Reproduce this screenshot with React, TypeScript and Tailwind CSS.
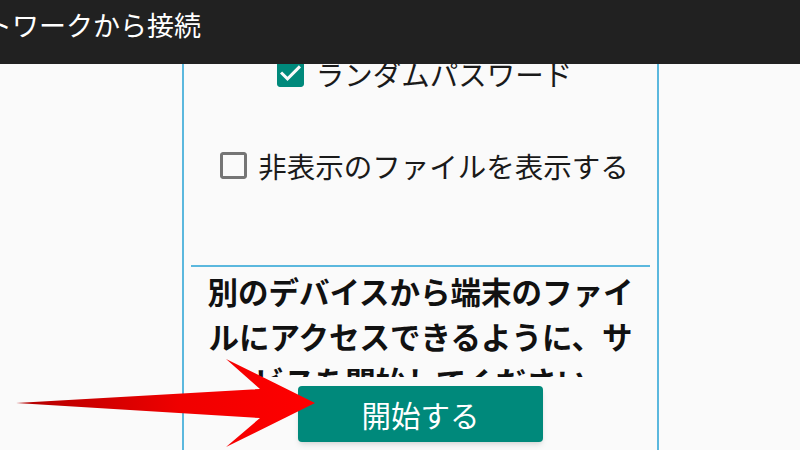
/**
 * Server settings screen — network connection panel with start button.
 */

function CheckBox({ checked }: { checked: boolean }) {
  return (
    <svg className="shrink-0" width="27" height="27" viewBox="3 3 18 18">
      {checked ? (
        <path
          fill="#00897b"
          d="M19 3H5c-1.11 0-2 .9-2 2v14c0 1.1.89 2 2 2h14c1.11 0 2-.9 2-2V5c0-1.1-.89-2-2-2zm-9 14l-5-5 1.41-1.41L10 14.17l7.59-7.59L19 8l-9 9z"
        />
      ) : (
        <path
          fill="#757575"
          d="M19 5v14H5V5h14m0-2H5c-1.1 0-2 .9-2 2v14c0 1.1.9 2 2 2h14c1.1 0 2-.9 2-2V5c0-1.1-.9-2-2-2z"
        />
      )}
    </svg>
  )
}

export default function App() {
  return (
    <div className="relative h-[450px] w-[800px] overflow-hidden bg-[#fafafa] font-['Noto_Sans_CJK_JP',sans-serif]">
      {/* Toolbar */}
      <div className="relative z-10 h-16 overflow-hidden bg-[#212121]">
        <p className="ml-[-69px] whitespace-nowrap pt-[9px] text-[27px] leading-[32px] text-white">ネットワークから接続</p>
      </div>

      <div className="flex h-[386px]">
        <div className="w-[182px]" />
        <div className="flex w-[477px] flex-col border-x-2 border-[#5bb8de] px-[7px]">
          <div className="mt-[-4px] flex h-[27px] items-center justify-center gap-[12px] pl-[8px]">
            <CheckBox checked />
            <span className="whitespace-nowrap text-[28.5px] leading-[27px] text-[#1a1a1a]">ランダムパスワード</span>
          </div>

          <div className="mt-[65px] flex h-[27px] items-center justify-center gap-[11px] pl-[8px]">
            <CheckBox checked={false} />
            <span className="whitespace-nowrap text-[28.5px] leading-[27px] text-[#1a1a1a]">非表示のファイルを表示する</span>
          </div>

          <div className="mt-[86px] h-[2px] bg-[#5bb8de]" />

          <div className="h-[110px] overflow-hidden pt-[2px] text-center text-[30.5px] font-bold leading-[45px] text-[#111]">
            <div className="whitespace-nowrap">別のデバイスから端末のファイ</div>
            <div className="whitespace-nowrap">ルにアクセスできるように、サ</div>
            <div className="whitespace-nowrap">ービスを開始してください。</div>
          </div>

          <button className="mt-[9px] flex h-[56px] w-[245px] items-center justify-center self-center rounded-[4px] bg-[#00897b] text-[29.5px] text-white shadow-md">
            開始する
          </button>
        </div>
      </div>

      {/* Annotation arrow */}
      <svg className="pointer-events-none absolute left-0 top-0 z-20" width="800" height="450" viewBox="0 0 800 450">
        <defs>
          <linearGradient id="arrowFill" x1="16" y1="0" x2="315" y2="0" gradientUnits="userSpaceOnUse">
            <stop offset="0" stopColor="#b00000" />
            <stop offset="0.55" stopColor="#f00000" />
            <stop offset="1" stopColor="#ff0000" />
          </linearGradient>
        </defs>
        <polygon points="16,403 260,389 226,359 315,403 226,447 260,418" fill="url(#arrowFill)" />
      </svg>
    </div>
  )
}
